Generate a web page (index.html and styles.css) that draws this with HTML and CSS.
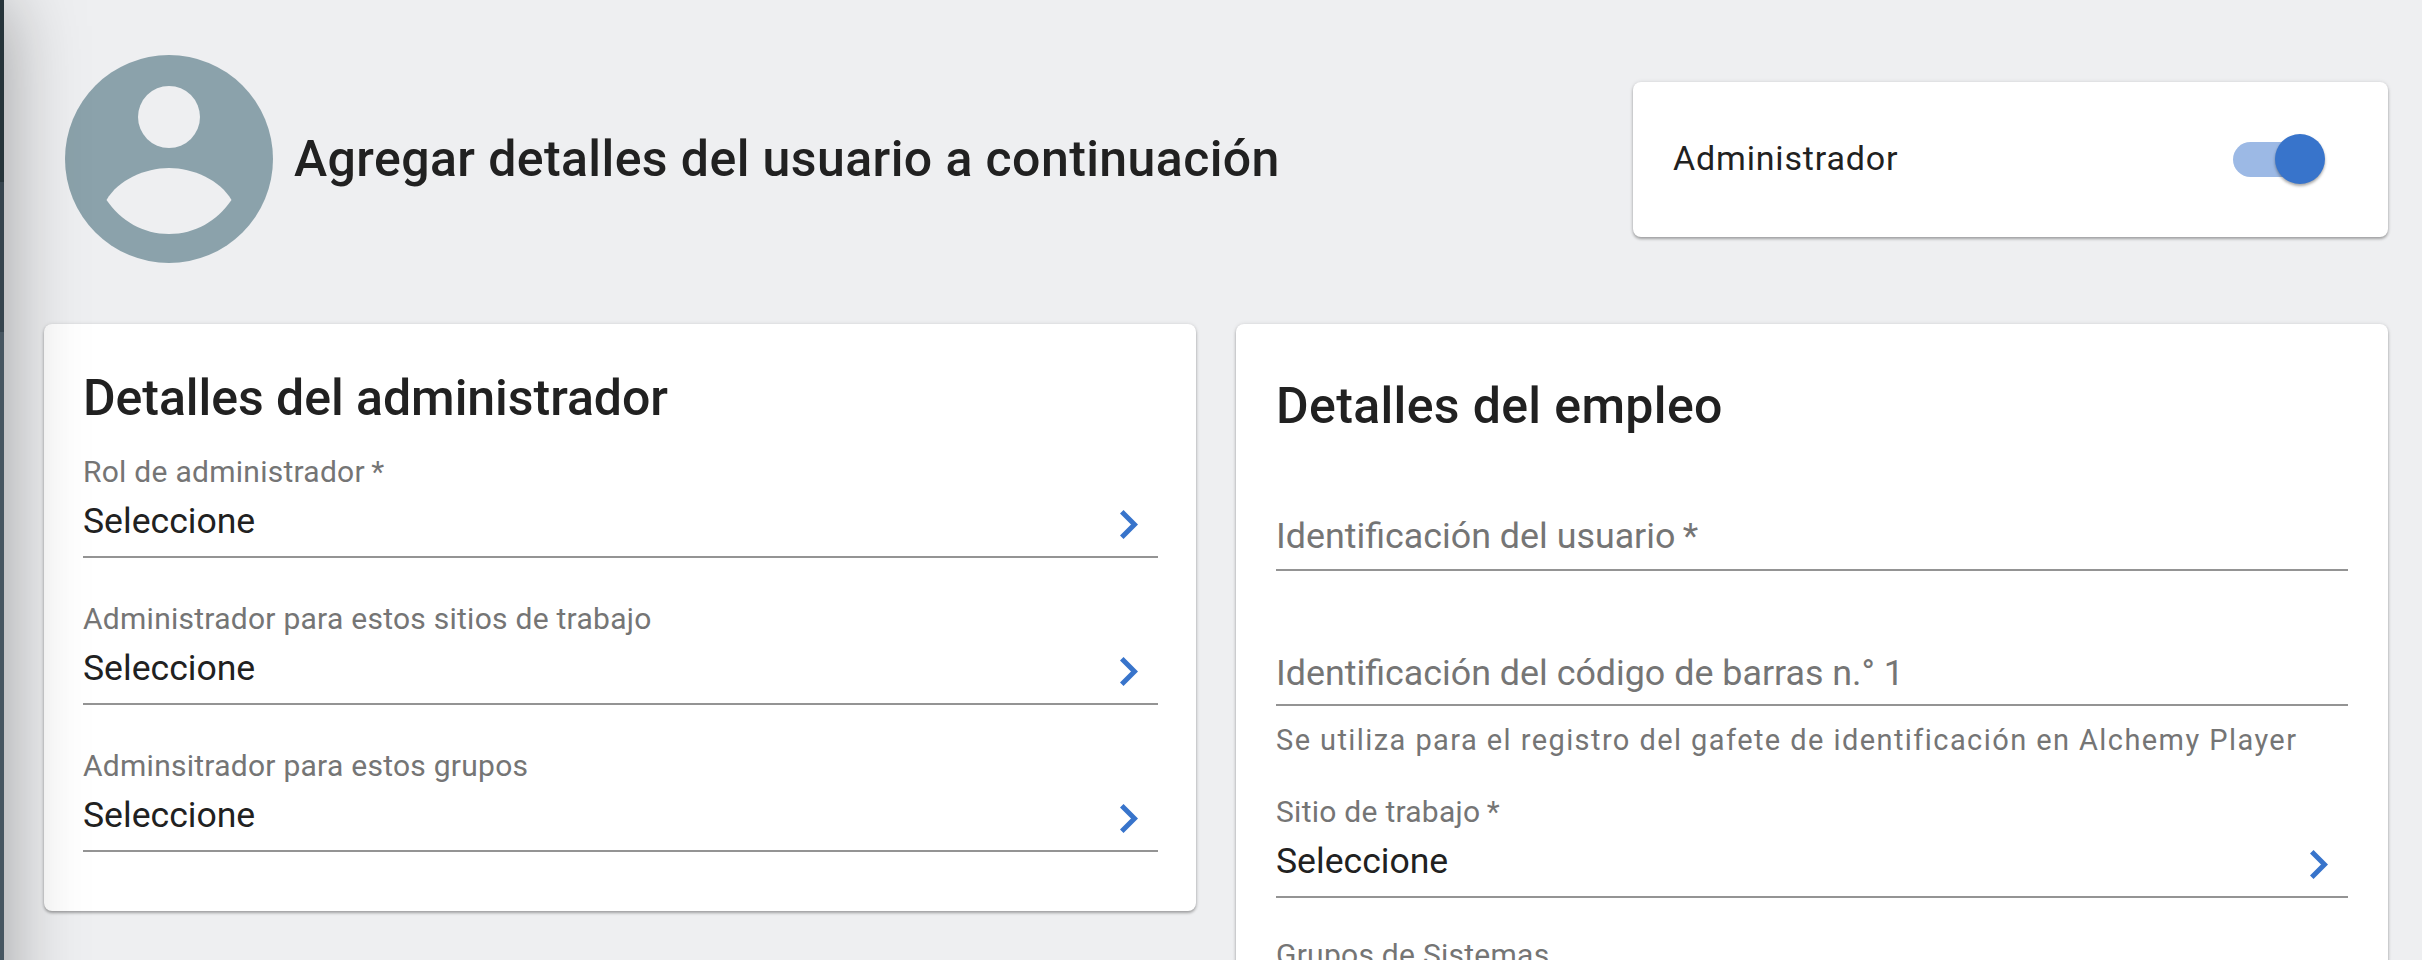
FILE: index.html
```html
<!DOCTYPE html>
<html lang="es">
<head>
<meta charset="utf-8">
<title>Agregar usuario</title>
<link rel="stylesheet" href="styles.css">
</head>
<body>
<div class="page">
  <aside class="rail"></aside>
  <main class="main">
    <header class="head">
      <div class="who">
        <svg class="avatar" viewBox="0 0 208 208" aria-hidden="true">
          <circle cx="104" cy="104" r="104" fill="#8ba2ab"/>
          <circle cx="104" cy="62" r="31" fill="#eeeff1"/>
          <path d="M41.5 145C53 125 80 113 104 113C128 113 155 125 166.5 145C152 166 130 179 104 179C78 179 56 166 41.5 145Z" fill="#eeeff1"/>
        </svg>
        <h1 class="page-title">Agregar detalles del usuario a continuación</h1>
      </div>
      <div class="card admin-card">
        <span class="admin-label">Administrador</span>
        <span class="switch"><span class="switch-track"></span><span class="switch-thumb"></span></span>
      </div>
    </header>
    <div class="columns">
      <section class="card panel panel-left">
        <h2 class="panel-title panel-title-left">Detalles del administrador</h2>
        <div class="field select">
          <label class="field-label">Rol de administrador&thinsp;*</label>
          <div class="field-value"><span>Seleccione</span><svg class="chev" viewBox="0 0 18 29" aria-hidden="true"><path d="M1.77 1.77L14.5 14.5L1.77 27.23" fill="none" stroke="#3874cb" stroke-width="5"/></svg></div>
        </div>
        <div class="field select">
          <label class="field-label">Administrador para estos sitios de trabajo</label>
          <div class="field-value"><span>Seleccione</span><svg class="chev" viewBox="0 0 18 29" aria-hidden="true"><path d="M1.77 1.77L14.5 14.5L1.77 27.23" fill="none" stroke="#3874cb" stroke-width="5"/></svg></div>
        </div>
        <div class="field select">
          <label class="field-label">Adminsitrador para estos grupos</label>
          <div class="field-value"><span>Seleccione</span><svg class="chev" viewBox="0 0 18 29" aria-hidden="true"><path d="M1.77 1.77L14.5 14.5L1.77 27.23" fill="none" stroke="#3874cb" stroke-width="5"/></svg></div>
        </div>
      </section>
      <section class="card panel panel-right">
        <h2 class="panel-title panel-title-wide">Detalles del empleo</h2>
        <div class="input first"><span class="placeholder">Identificación del usuario&thinsp;*</span></div>
        <div class="input second"><span class="placeholder">Identificación del código de barras n.° 1</span></div>
        <p class="helper">Se utiliza para el registro del gafete de identificación en Alchemy Player</p>
        <div class="field select work">
          <label class="field-label">Sitio de trabajo&thinsp;*</label>
          <div class="field-value"><span>Seleccione</span><svg class="chev" viewBox="0 0 18 29" aria-hidden="true"><path d="M1.77 1.77L14.5 14.5L1.77 27.23" fill="none" stroke="#3874cb" stroke-width="5"/></svg></div>
        </div>
        <div class="field select groups">
          <label class="field-label">Grupos de Sistemas</label>
        </div>
      </section>
    </div>
  </main>
</div>
</body>
</html>
```
FILE: styles.css
```css
* { box-sizing: border-box; }
html, body { margin: 0; height: 960px; overflow: hidden; }
body { background: #eeeff1; color: #212121; font-family: Roboto, "Liberation Sans", sans-serif; }
.page { display: flex; height: 960px; overflow: hidden; }
.rail { position: relative; z-index: 2; flex: 0 0 4px; width: 4px; height: 960px; background: linear-gradient(#26343a 0 182px, #36444e 182px 332px, #475661 332px); }
.rail::before { content: ""; position: absolute; z-index: -1; left: -200px; top: 0; width: 204px; height: 1400px; box-shadow: 0 0 80px rgba(0,0,0,.36); }
.main { flex: 1; min-width: 0; padding: 55px 34px 0 40px; }
.head { display: flex; align-items: center; justify-content: space-between; height: 208px; padding-left: 21px; }
.who { display: flex; align-items: center; gap: 21px; }
.avatar { width: 208px; height: 208px; display: block; flex: none; }
.page-title { margin: 0; font-size: 50px; line-height: 60px; font-weight: 500; letter-spacing: .41px; }
.card { background: #fff; border-radius: 8px; box-shadow: 0 2px 3px rgba(0,0,0,.3), 0 0 4px rgba(0,0,0,.1); }
.admin-card { width: 755px; height: 155px; display: flex; align-items: center; justify-content: space-between; padding: 0 63px 0 40px; }
.admin-label { font-size: 34px; letter-spacing: .83px; position: relative; top: -1px; }
.switch { position: relative; display: block; width: 92px; height: 50px; }
.switch-track { position: absolute; left: 0; right: 12px; top: 8px; height: 35px; border-radius: 18px; background: #9cb9e5; }
.switch-thumb { position: absolute; right: 0; top: 0; width: 50px; height: 50px; border-radius: 50%; background: #3874cb; box-shadow: 0 2px 3px rgba(0,0,0,.35); }
.columns { display: grid; grid-template-columns: 1fr 1fr; gap: 40px; margin-top: 61px; align-items: start; }
.panel-left { height: 587px; padding: 44px 38px 0 39px; }
.panel-right { height: 700px; padding: 52px 40px 0; }
.panel-title { margin: 0; font-size: 50px; line-height: 60px; font-weight: 500; }
.panel-title-left { letter-spacing: -.04px; }
.panel-title-wide { letter-spacing: .36px; }
.field-label { display: block; font-size: 30px; line-height: 36px; color: #757575; letter-spacing: .26px; }
.field-value { display: flex; align-items: flex-start; justify-content: space-between; height: 68px; line-height: 63px; padding-right: 20px; border-bottom: 2px solid #949494; font-size: 35.6px; color: #212121; }
.chev { width: 18px; height: 29px; display: block; flex: none; margin-top: 20px; }
.panel-left .field { margin-top: 43px; }
.panel-left .panel-title + .field { margin-top: 26px; }
.input { display: flex; align-items: center; height: 61px; padding-bottom: 8px; border-bottom: 2px solid #949494; }
.input.first { margin-top: 74px; }
.input.second { margin-top: 74px; padding-bottom: 4px; }
.placeholder { font-size: 35.85px; color: #757575; }
.helper { margin: 16px 0 0; font-size: 29px; line-height: 36px; color: #757575; letter-spacing: 1.42px; }
.field.work { margin-top: 36px; }
.field.groups { margin-top: 39px; }
```
